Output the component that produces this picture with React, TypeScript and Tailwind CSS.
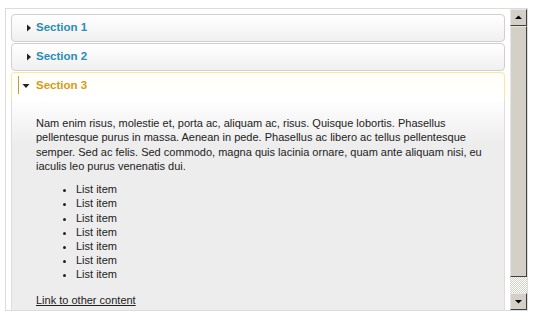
import { ReactNode } from 'react'

type Section = {
  title: string
  open?: boolean
}

const sections: Section[] = [{ title: 'Section 1' }, { title: 'Section 2' }, { title: 'Section 3', open: true }]

const items = ['List item', 'List item', 'List item', 'List item', 'List item', 'List item', 'List item']

function Header({ title, open }: Section) {
  if (open) {
    return (
      <div className="relative flex h-[27px] items-center rounded-t-[4px] border border-b-0 border-[#fbe7a0] bg-gradient-to-b from-[#fffef7] to-white pl-[10px]">
        <span className="absolute left-[6px] top-[3px] h-[18px] w-px bg-[#c89a3a]" />
        <svg className="mr-[6px] h-[8px] w-[8px]" viewBox="0 0 8 8">
          <path d="M0.5 2h7L4 6z" fill="#222" />
        </svg>
        <span className="text-[11.5px] font-bold text-[#d99a13]">{title}</span>
      </div>
    )
  }
  return (
    <div className="flex h-[28px] items-center rounded-[4px] border border-[#d0d0d0] bg-gradient-to-b from-white to-[#f0f0f0] pl-[13px]">
      <svg className="mr-[3px] h-[8px] w-[8px]" viewBox="0 0 8 8">
        <path d="M2 0.5v7L6 4z" fill="#222" />
      </svg>
      <span className="text-[11.5px] font-bold text-[#2a8db5]">{title}</span>
    </div>
  )
}

function ScrollButton({ children }: { children: ReactNode }) {
  return (
    <div className="flex h-[17px] w-[17px] shrink-0 items-center justify-center border border-t-[#e8e6e0] border-l-[#e8e6e0] border-r-[#404040] border-b-[#404040] bg-[#d4d0c8]">
      {children}
    </div>
  )
}

function Scrollbar() {
  return (
    <div className="flex w-[17px] flex-col">
      <ScrollButton>
        <svg className="h-[7px] w-[7px]" viewBox="0 0 7 7">
          <path d="M0 5h7L3.5 1.5z" fill="#000" />
        </svg>
      </ScrollButton>
      <div className="flex flex-1 flex-col bg-[repeating-conic-gradient(#d4d0c8_0_25%,#ffffff_0_50%)] bg-[length:2px_2px]">
        <div className="h-[251px] border border-t-[#e8e6e0] border-l-[#e8e6e0] border-r-[#404040] border-b-[#404040] bg-[#d4d0c8]" />
      </div>
      <ScrollButton>
        <svg className="h-[7px] w-[7px]" viewBox="0 0 7 7">
          <path d="M0 2h7L3.5 5.5z" fill="#000" />
        </svg>
      </ScrollButton>
    </div>
  )
}

export default function App() {
  return (
    <div className="h-[318px] w-[533px] bg-white pl-[5px] pt-[8px] font-['Liberation_Sans',Arial,sans-serif]">
      <div className="flex h-[303px] w-[523px] overflow-hidden border border-[#dcdcdc]">
        <div className="flex-1 overflow-hidden px-[5px] pt-[5px]">
          <div className="flex flex-col gap-px">
            {sections.map((s) => (
              <Header key={s.title} {...s} />
            ))}
          </div>
          <div className="border border-t-0 border-[#dddddd] bg-gradient-to-b from-white to-[#ededed] to-[45px] pb-[20px] pl-[24px] pr-[18px] pt-[17px] text-[11px] leading-[14.3px] text-[#222]">
            <p>
              Nam enim risus, molestie et, porta ac, aliquam ac, risus. Quisque lobortis. Phasellus pellentesque
              purus in massa. Aenean in pede. Phasellus ac libero ac tellus pellentesque semper. Sed ac felis. Sed
              commodo, magna quis lacinia ornare, quam ante aliquam nisi, eu iaculis leo purus venenatis dui.
            </p>
            <ul className="mt-[9px] list-disc pl-[40px] leading-[14.2px]">
              {items.map((item, i) => (
                <li key={i}>{item}</li>
              ))}
            </ul>
            <a href="#" className="mt-[11px] block underline">
              Link to other content
            </a>
          </div>
        </div>
        <Scrollbar />
      </div>
    </div>
  )
}
